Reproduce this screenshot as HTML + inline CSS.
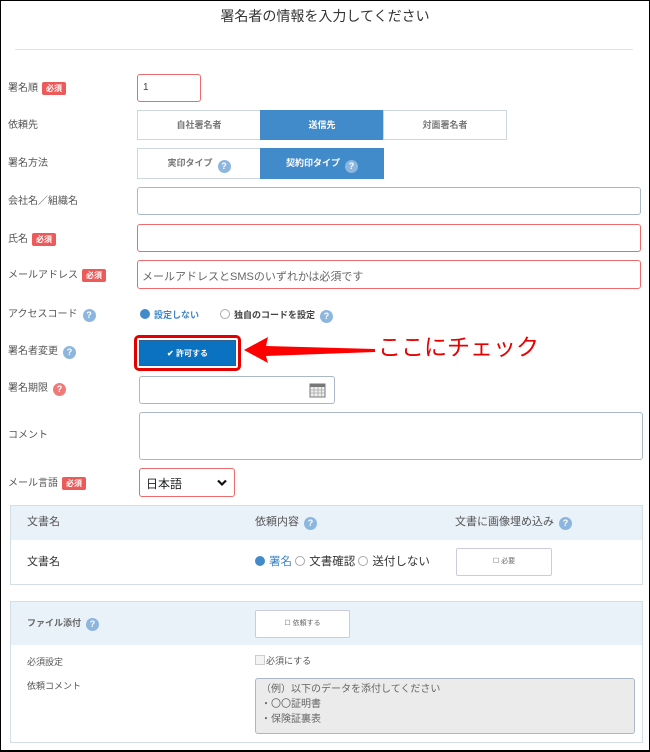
<!DOCTYPE html>
<html><head><meta charset="utf-8"><style>
*{box-sizing:border-box;margin:0;padding:0}
body{width:650px;height:752px;position:relative;background:#fff;font-family:"Liberation Sans","Noto Sans CJK JP",sans-serif;color:#555;font-size:10px;overflow:hidden}
.a{position:absolute}
.frame{left:0;top:0;width:650px;height:752px;border:1px solid #000;border-bottom:2px solid #000}
.lbl{position:absolute;font-size:10px;color:#555;white-space:nowrap;line-height:12px}
.badge{display:inline-block;background:#ec5a5a;color:#fff;font-size:8px;font-weight:bold;padding:1px 4px;border-radius:2px;margin-left:4px;vertical-align:0;line-height:11px}
.q{display:inline-block;width:13px;height:13px;border-radius:50%;background:#8db6df;color:#fff;font-size:9px;font-weight:bold;text-align:center;line-height:13px;vertical-align:-1px;margin-left:5px}
.inp{position:absolute;border:1px solid #a9b7c6;border-radius:3px;background:#fff}
.red{border-color:#ee6b6b}
.seg{position:absolute;border:1px solid #cdd7e0;background:#fff;color:#777;font-size:9px;font-weight:bold;text-align:center}
.on{background:#428bca;color:#fff;border-color:#428bca}
.seg .q{vertical-align:-3px}
.radio{display:inline-block;width:10px;height:10px;border-radius:50%;border:1px solid #aaa;vertical-align:-1px;margin-right:4px;background:#fff}
.radio.s{background:#428bca;border-color:#428bca}
.btn{position:absolute;border:1px solid #ccd;border-radius:2px;background:#fff;font-size:7px;color:#666;text-align:center}
</style></head><body>
<div class="a frame"></div>
<div class="a" style="left:0;width:650px;top:6px;text-align:center;font-size:14px;color:#333">署名者の情報を入力してください</div>
<div class="a" style="left:15px;top:49px;width:618px;height:1px;background:#e3e3e3"></div>

<div class="lbl" style="left:8px;top:82px">署名順<span class="badge">必須</span></div>
<div class="inp red" style="left:137px;top:74px;width:64px;height:28px;padding:7px 5px;color:#444">1</div>

<div class="lbl" style="left:8px;top:120px">依頼先</div>
<div class="seg" style="left:137px;top:110px;width:124px;height:30px;line-height:28px">自社署名者</div>
<div class="seg on" style="left:260px;top:110px;width:124px;height:30px;line-height:28px">送信先</div>
<div class="seg" style="left:383px;top:110px;width:124px;height:30px;line-height:28px">対面署名者</div>

<div class="lbl" style="left:8px;top:158px">署名方法</div>
<div class="seg" style="left:137px;top:148px;width:124px;height:31px;line-height:29px">実印タイプ<span class="q">?</span></div>
<div class="seg on" style="left:260px;top:148px;width:124px;height:31px;line-height:29px">契約印タイプ<span class="q">?</span></div>

<div class="lbl" style="left:8px;top:196px">会社名／組織名</div>
<div class="inp" style="left:137px;top:187px;width:504px;height:28px"></div>

<div class="lbl" style="left:8px;top:233px">氏名<span class="badge">必須</span></div>
<div class="inp red" style="left:137px;top:224px;width:504px;height:28px"></div>

<div class="lbl" style="left:8px;top:269px">メールアドレス<span class="badge">必須</span></div>
<div class="inp red" style="left:137px;top:260px;width:504px;height:29px;padding:7px 4px;font-size:11px;color:#666">メールアドレスとSMSのいずれかは必須です</div>

<div class="lbl" style="left:8px;top:309px">アクセスコード<span class="q">?</span></div>
<div class="lbl" style="left:140px;top:309px;font-weight:bold;color:#3f87c6;font-size:9px"><span class="radio s"></span>設定しない</div>
<div class="lbl" style="left:220px;top:309px;font-weight:bold;color:#444;font-size:9px"><span class="radio"></span>独自のコードを設定<span class="q">?</span></div>

<div class="lbl" style="left:8px;top:346px">署名者変更<span class="q">?</span></div>
<div class="a" style="left:134px;top:335px;width:107px;height:36px;border:3px solid #e40000;border-radius:5px"></div>
<div class="a" style="left:139px;top:340px;width:97px;height:26px;background:#0a72c1;color:#fff;font-size:8px;font-weight:bold;text-align:center;line-height:26px;border:1px solid #2f5f8f">✔ 許可する</div>
<svg class="a" style="left:240px;top:332px" width="140" height="36"><polygon points="4,18 28,5 26,14 135,17 135,20 26,24 28,31" fill="#f00"/></svg>
<div class="a" style="left:378px;top:332px;font-size:23px;color:#e60000;white-space:nowrap;line-height:30px">ここにチェック</div>

<div class="lbl" style="left:8px;top:383px">署名期限<span class="q" style="background:#f07a7a">?</span></div>
<div class="inp" style="left:139px;top:376px;width:196px;height:28px"></div>
<svg class="a" style="left:309px;top:382px" width="17" height="16"><rect x="1" y="2" width="15" height="13" fill="#eee" stroke="#777"/><rect x="1" y="2" width="15" height="3" fill="#777"/><g stroke="#999" stroke-width=".6"><line x1="1" y1="8" x2="16" y2="8"/><line x1="1" y1="11" x2="16" y2="11"/><line x1="5" y1="5" x2="5" y2="15"/><line x1="9" y1="5" x2="9" y2="15"/><line x1="12.5" y1="5" x2="12.5" y2="15"/></g></svg>

<div class="lbl" style="left:8px;top:430px">コメント</div>
<div class="inp" style="left:139px;top:412px;width:504px;height:48px"></div>

<div class="lbl" style="left:8px;top:477px">メール言語<span class="badge">必須</span></div>
<div class="inp red" style="left:139px;top:468px;width:96px;height:29px;padding:6px 6px;font-size:12px;color:#222">日本語<svg style="position:absolute;right:7px;top:10px" width="10" height="8"><polyline points="1,1.5 5,5.5 9,1.5" fill="none" stroke="#111" stroke-width="2.2"/></svg></div>

<div class="a" style="left:10px;top:505px;width:633px;height:80px;border:1px solid #d5dde5"></div>
<div class="a" style="left:11px;top:506px;width:631px;height:34px;background:#e9f1f9"></div>
<div class="lbl" style="left:27px;top:516px;font-size:11px">文書名</div>
<div class="lbl" style="left:255px;top:516px;font-size:11px">依頼内容<span class="q">?</span></div>
<div class="lbl" style="left:455px;top:516px;font-size:11px">文書に画像埋め込み<span class="q">?</span></div>
<div class="lbl" style="left:27px;top:556px;font-size:11px;color:#333">文書名</div>
<div class="lbl" style="left:255px;top:556px;font-size:11.5px;color:#333"><span class="radio s"></span><span style="color:#3f87c6">署名</span> <span class="radio"></span>文書確認 <span class="radio"></span>送付しない</div>
<div class="btn" style="left:456px;top:548px;width:96px;height:28px;line-height:26px">☐ 必要</div>

<div class="a" style="left:10px;top:601px;width:633px;height:142px;border:1px solid #d5dde5"></div>
<div class="a" style="left:11px;top:602px;width:631px;height:43px;background:#e9f1f9"></div>
<div class="lbl" style="left:27px;top:617px;font-size:9px;font-weight:bold;color:#666">ファイル添付<span class="q">?</span></div>
<div class="btn" style="left:255px;top:610px;width:95px;height:28px;line-height:26px">☐ 依頼する</div>
<div class="lbl" style="left:27px;top:656px;font-size:9px">必須設定</div>
<div class="lbl" style="left:255px;top:655px;font-size:9px"><span style="display:inline-block;width:10px;height:10px;border:1px solid #ccc;background:#f4f4f4;vertical-align:-1px;margin-right:1px"></span>必須にする</div>
<div class="lbl" style="left:27px;top:680px;font-size:9px">依頼コメント</div>
<div class="a" style="left:255px;top:678px;width:380px;height:56px;background:#ebebeb;border:1px solid #a9b7c6;border-radius:3px;padding:3px 5px;font-size:10px;line-height:15px;color:#666">（例）以下のデータを添付してください<br>・〇〇証明書<br>・保険証裏表</div>
</body></html>
